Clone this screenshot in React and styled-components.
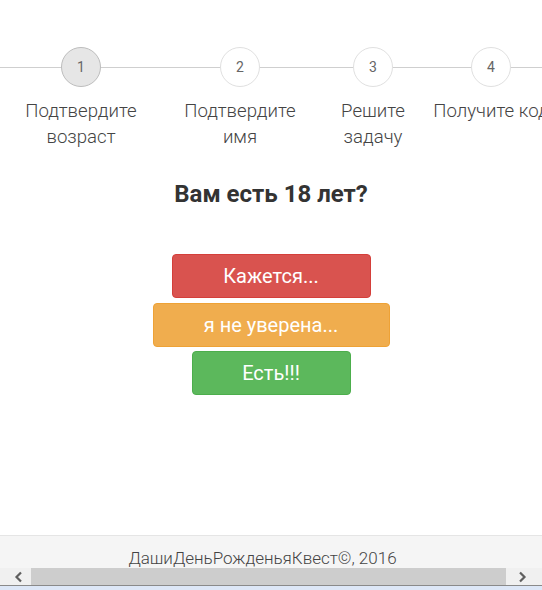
import React from 'react';
import styled, { createGlobalStyle } from 'styled-components';

const steps = [
  { num: 1, label: ['Подтвердите', 'возраст'], width: 162, active: true },
  { num: 2, label: ['Подтвердите', 'имя'], width: 156 },
  { num: 3, label: ['Решите', 'задачу'], width: 110 },
  { num: 4, label: ['Получите код'], width: 126 },
];

const answers = [
  { text: 'Кажется...', width: 199, bg: '#d9534f', border: '#d43f3a' },
  { text: 'я не уверена...', width: 237, bg: '#f0ad4e', border: '#eea236' },
  { text: 'Есть!!!', width: 159, bg: '#5cb85c', border: '#4cae4c' },
];

export default function App() {
  return (
    <Page>
      <GlobalStyle />
      <Main>
        <Steps>
          {steps.map((s) => (
            <Step key={s.num} $width={s.width}>
              <Circle $active={s.active}>{s.num}</Circle>
              <StepLabel>
                {s.label.map((line) => (
                  <div key={line}>{line}</div>
                ))}
              </StepLabel>
            </Step>
          ))}
        </Steps>
        <Question>Вам есть 18 лет?</Question>
        <Answers>
          {answers.map((a) => (
            <AnswerButton
              key={a.text}
              $width={a.width}
              $bg={a.bg}
              $border={a.border}
            >
              {a.text}
            </AnswerButton>
          ))}
        </Answers>
      </Main>
      <Footer>ДашиДеньРожденьяКвест©, 2016</Footer>
      <ScrollBar>
        <ScrollTrack>
          <ArrowButton $side='left'>
            <svg width='10' height='12' viewBox='0 0 10 12'>
              <polyline
                points='7,1.5 2.5,6 7,10.5'
                fill='none'
                stroke='#5f5f5f'
                strokeWidth='2.2'
              />
            </svg>
          </ArrowButton>
          <Thumb />
          <ArrowButton $side='right'>
            <svg width='10' height='12' viewBox='0 0 10 12'>
              <polyline
                points='3,1.5 7.5,6 3,10.5'
                fill='none'
                stroke='#5f5f5f'
                strokeWidth='2.2'
              />
            </svg>
          </ArrowButton>
        </ScrollTrack>
        <TaskStrip />
      </ScrollBar>
    </Page>
  );
}

const GlobalStyle = createGlobalStyle`
  html, body {
    margin: 0;
    padding: 0;
    overflow: hidden;
    background: #fff;
  }
  body {
    font-family: Roboto, 'Noto Sans', sans-serif;
    color: #333;
  }
`;

const Page = styled.div`
  display: flex;
  flex-direction: column;
  min-height: 100vh;
  width: 542px;
  overflow: hidden;
`;

const Main = styled.div`
  flex: 1;
  padding-top: 47px;
`;

const Steps = styled.div`
  position: relative;
  display: flex;
  width: 554px;

  &::before {
    content: '';
    position: absolute;
    left: 0;
    right: 0;
    top: 20px;
    height: 1px;
    background: #cfcfcf;
  }
`;

const Step = styled.div`
  position: relative;
  flex: 0 0 ${(p) => p.$width}px;
  display: flex;
  flex-direction: column;
  align-items: center;
`;

const Circle = styled.div`
  width: 38px;
  height: 38px;
  border-radius: 50%;
  border: 1px solid ${(p) => (p.$active ? '#bdbdbd' : '#e0e0e0')};
  background: ${(p) => (p.$active ? '#e6e6e6' : '#fff')};
  display: flex;
  align-items: center;
  justify-content: center;
  font-size: 14px;
  color: #666;
`;

const StepLabel = styled.div`
  margin-top: 11px;
  font-size: 18.6px;
  font-weight: 300;
  line-height: 26px;
  color: #444;
  text-align: center;
  white-space: nowrap;
`;

const Question = styled.h3`
  margin: 29px 0 0;
  font-size: 24px;
  font-weight: 700;
  line-height: 31px;
  color: #333;
  text-align: center;
`;

const Answers = styled.div`
  margin-top: 44px;
  display: flex;
  flex-direction: column;
  align-items: center;
  gap: 5px;
`;

const AnswerButton = styled.button`
  width: ${(p) => p.$width}px;
  height: 44px;
  padding: 0;
  border: 1px solid ${(p) => p.$border};
  border-radius: 4px;
  background: ${(p) => p.$bg};
  color: #fff;
  font-family: Roboto, sans-serif;
  font-size: 20px;
  font-weight: 400;
  cursor: pointer;

  &:last-child {
    margin-top: -1px;
  }
`;

const Footer = styled.footer`
  height: 54px;
  border-top: 1px solid #e5e5e5;
  background: #f5f5f5;
  box-sizing: content-box;
  padding-right: 17px;
  text-align: center;
  font-size: 17px;
  font-weight: 300;
  color: #444;
  line-height: 44px;
`;

const ScrollBar = styled.div`
  position: fixed;
  left: 0;
  right: 0;
  bottom: 0;
  display: flex;
  flex-direction: column;
`;

const ScrollTrack = styled.div`
  display: flex;
  height: 17px;
  background: #f0f0f0;
  border-bottom: 1px solid #8a8a8a;
`;

const ArrowButton = styled.div`
  flex: 0 0 ${(p) => (p.$side === 'left' ? 31 : 36)}px;
  display: flex;
  align-items: center;
  justify-content: ${(p) => (p.$side === 'left' ? 'flex-end' : 'flex-start')};
  padding: ${(p) => (p.$side === 'left' ? '0 7px 0 0' : '0 0 0 11px')};
  box-sizing: border-box;
`;

const Thumb = styled.div`
  flex: 1;
  background: #cdcdcd;
`;

const TaskStrip = styled.div`
  height: 4px;
  background: #dde7f7;
`;
